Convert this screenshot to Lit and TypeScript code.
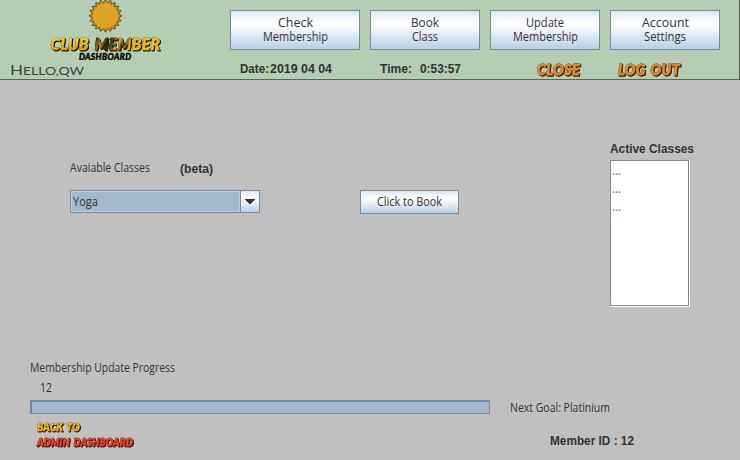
import { LitElement, html, svg, css } from "lit";
import { customElement, property } from "lit/decorators.js";

/** One line of text set to an exact width; its box is as high as the line, baseline at `base`. */
@customElement("fit-text")
export class FitText extends LitElement {
  @property() text = "";
  @property({ type: Number }) w = 50;
  @property({ type: Number }) h = 14;
  @property({ type: Number }) base = 12;
  @property() kind = "label";

  static styles = css`
    :host { display: block; flex: none; }
    svg { display: block; overflow: visible; }
    text { fill: #333; white-space: pre; }
    .label { font: 12px "Open Sans", "Noto Sans", sans-serif; }
    .dots { font: bold 11px "Open Sans", sans-serif; fill: #8a8a92; }
    .bold { font: bold 12px "Liberation Sans", Arial, sans-serif; }
    .hello { font: 11.5px Lato, sans-serif; fill: #3a4144; }
    .initial { font-size: 14px; }
    .comic {
      font: italic 900 14.5px Lato, sans-serif; word-spacing: 1.5px; letter-spacing: 0.4px;
      stroke-width: 0.8px; paint-order: stroke;
      filter: drop-shadow(1px 1px 0.3px #26241a) drop-shadow(0.3px 0.3px 0.3px #26241a);
    }
    .small { font-size: 12px; stroke-width: 0.6px; }
    .orange { fill: #e28a2e; stroke: #d27f2a; }
    .gold { fill: #f4b824; stroke: #dfa11f; }
    .red { fill: #f8432c; stroke: #e23a27; }
  `;

  render() {
    const body =
      this.kind === "hello"
        ? svg`<tspan class="initial">${this.text.charAt(0)}</tspan>${this.text.slice(1)}`
        : this.text;
    return html`<svg width=${this.w} height=${this.h}>
      ${svg`<text class=${this.kind} x="0" y=${this.base} textLength=${this.w}
        lengthAdjust="spacingAndGlyphs">${body}</text>`}
    </svg>`;
  }
}

@customElement("club-logo")
export class ClubLogo extends LitElement {
  static styles = css`
    :host { display: block; }
    svg { display: block; }
    .t {
      font: italic 900 17.5px Lato, sans-serif; stroke-width: 0.6px; letter-spacing: 0.5px;
      filter: drop-shadow(1px 1px 0.3px #141005) drop-shadow(0.5px 0.5px 0.4px #141005);
    }
    .sub { font: italic 900 9.5px Lato, sans-serif; letter-spacing: 0.4px; fill: #080808; stroke: #080808; stroke-width: 0.5px; }
  `;

  private sun() {
    const pts: string[] = [];
    const n = 20;
    for (let i = 0; i < n * 2; i++) {
      const r = i % 2 ? 13.2 : 16.4;
      const a = (i * Math.PI) / n - Math.PI / 2;
      pts.push(`${(56.5 + r * Math.cos(a)).toFixed(2)},${(15.8 + r * Math.sin(a)).toFixed(2)}`);
    }
    return pts.join(" ");
  }

  render() {
    return html`<svg width="116" height="60" viewBox="0 0 116 60">
      <defs>
        <linearGradient id="g" x1="0" y1="0" x2="0" y2="1">
          <stop offset="0.25" stop-color="#ffd83a" />
          <stop offset="0.85" stop-color="#dc9a10" />
        </linearGradient>
        <linearGradient id="m" x1="0" y1="0" x2="1" y2="0.12">
          <stop offset="0" stop-color="#8a6510" />
          <stop offset="0.06" stop-color="#3a2b08" />
          <stop offset="0.15" stop-color="#d29a1a" />
          <stop offset="0.23" stop-color="#2b2006" />
          <stop offset="0.32" stop-color="#5a430c" />
          <stop offset="0.42" stop-color="#e9b021" />
          <stop offset="0.5" stop-color="#54400d" />
          <stop offset="0.6" stop-color="#efb822" />
          <stop offset="1" stop-color="#f0bd28" />
        </linearGradient>
      </defs>
      <polygon points=${this.sun()} fill="#cf971c" stroke="#5c4c1e" stroke-width="1" />
      <circle cx="56.5" cy="15.8" r="12" fill="#dca524" />
      <text class="t" x="1.5" y="49.5" textLength="38.5" lengthAdjust="spacingAndGlyphs" fill="url(#g)" stroke="url(#g)">CLUB</text>
      <text class="t" x="45.5" y="49.5" textLength="66" lengthAdjust="spacingAndGlyphs" fill="url(#m)" stroke="url(#m)">MEMBER</text>
      <text class="sub" x="30" y="60.4" textLength="52.5" lengthAdjust="spacingAndGlyphs">DASHBOARD</text>
    </svg>`;
  }
}

@customElement("app-root")
export class AppRoot extends LitElement {
  static styles = css`
    :host { display: block; width: 740px; height: 460px; background: #c0c0c0; overflow: hidden; }
    * { box-sizing: border-box; }
    header {
      height: 80px; display: grid; grid-template-columns: 230px 1fr;
      background: #b4cdb3; border-right: 1px solid #56675a; border-bottom: 1px solid #56675a;
    }
    .brand club-logo { margin-left: 49px; }
    .brand fit-text { margin-left: 10px; }
    nav { display: grid; grid-template-columns: 130px 110px 110px 110px; gap: 10px; padding-top: 10px; }
    .btn {
      display: flex; flex-direction: column; align-items: center; justify-content: center;
      margin: 0; padding: 0; border: 1px solid #7a8a99; border-radius: 0; height: 40px;
      background: linear-gradient(#dde8f3 0%, #ffffff 32%, #ffffff 36%, #b8cfe5 100%);
    }
    .status { display: flex; padding: 12px 0 0 10px; }
    .gap-date { margin-left: 1px; }
    .gap-time { margin-left: 48px; }
    .gap-clock { margin-left: 8px; }
    .gap-close { margin-left: 76px; }
    .gap-out { margin-left: 38px; }
    main { height: 380px; display: grid; grid-template-rows: 280px 100px; }
    .booking { display: grid; grid-template-columns: 360px 250px 80px; padding-top: 60px; }
    .heading { display: flex; gap: 30px; height: 30px; margin: 20px 0 0 70px; }
    .heading .beta { margin-top: 2px; }
    .combo { display: flex; width: 190px; height: 23px; margin-left: 70px; border: 1px solid #7a8a99; }
    .value { flex: 1; border: 1px solid #b8cfe5; background: #a3b8cc; padding: 2px 0 0 1px; }
    .arrow {
      width: 19px; border-left: 1px solid #7a8a99; display: flex; align-items: center; justify-content: center;
      background: linear-gradient(#dde8f3, #fff 35%, #b8cfe5);
    }
    .book { width: 99px; height: 24px; margin-top: 50px; }
    .active { display: flex; flex-direction: column; }
    .list {
      width: 80px; height: 147px; margin-top: 6px; border-right: 1px solid #fff; border-bottom: 1px solid #fff;
    }
    .sheet { height: 146px; border: 1px solid #7a8a99; background: #fff; padding: 2px 0 0 1px; }
    .progress { display: grid; grid-template-columns: 490px 1fr; }
    .left { padding-left: 30px; }
    .count { margin: 6px 0 0 10px; }
    .track { height: 14px; margin-top: 6px; border: 1px solid #7a8a99; background: #7a8a99; }
    .fill { height: 12px; background: #a3b8cc; border-top: 1px solid #6382bf; border-left: 1px solid #6382bf; }
    .links { padding: 7px 0 0 7px; }
    .goal { margin: 40px 0 0 20px; }
    .member { margin: 20px 0 0 60px; }
  `;

  private menu = [
    [["Check", 35], ["Membership", 65]],
    [["Book", 28], ["Class", 26]],
    [["Update", 38], ["Membership", 65]],
    [["Account", 47], ["Settings", 42]],
  ];

  render() {
    return html`
      <header>
        <div class="brand">
          <club-logo></club-logo>
          <fit-text kind="hello" text="HELLO,QW" w="74" h="19" base="15"></fit-text>
        </div>
        <div>
          <nav>
            ${this.menu.map(
              (lines) => html`<button class="btn">
                ${lines.map(([t, w]) => html`<fit-text .text=${t} .w=${w} h="14" base="11"></fit-text>`)}
              </button>`
            )}
          </nav>
          <div class="status">
            <fit-text kind="bold" text="Date:" w="29" base="11"></fit-text>
            <fit-text class="gap-date" kind="bold" text="2019 04 04" w="62" base="11"></fit-text>
            <fit-text class="gap-time" kind="bold" text="Time:" w="32" base="11"></fit-text>
            <fit-text class="gap-clock" kind="bold" text="0:53:57" w="41" base="11"></fit-text>
            <fit-text class="gap-close" kind="comic orange" text="CLOSE" w="43" base="13"></fit-text>
            <fit-text class="gap-out" kind="comic orange" text="LOG OUT" w="62" base="13"></fit-text>
          </div>
        </div>
      </header>
      <main>
        <section class="booking">
          <div>
            <div class="heading">
              <fit-text text="Avaiable Classes" w="80"></fit-text>
              <fit-text class="beta" kind="bold" text="(beta)" w="33" base="11"></fit-text>
            </div>
            <div class="combo">
              <div class="value"><fit-text text="Yoga" w="25"></fit-text></div>
              <div class="arrow">
                <svg width="10" height="5" viewBox="0 0 10 5" shape-rendering="crispEdges">
                  <path d="M0 0H10V1H9V2H8V3H7V4H6V5H4V4H3V3H2V2H1V1H0Z" fill="#333" />
                </svg>
              </div>
            </div>
          </div>
          <button class="btn book"><fit-text text="Click to Book" w="65" h="14" base="11"></fit-text></button>
          <div class="active">
            <fit-text kind="bold" text="Active Classes" w="84" h="14" base="13"></fit-text>
            <div class="list">
              <div class="sheet">
                ${[0, 1, 2].map(() => html`<fit-text kind="dots" text="..." w="9" h="18" base="12"></fit-text>`)}
              </div>
            </div>
          </div>
        </section>
        <section class="progress">
          <div class="left">
            <fit-text text="Membership Update Progress" w="145"></fit-text>
            <fit-text class="count" text="12" w="12"></fit-text>
            <div class="track"><div class="fill"></div></div>
            <div class="links">
              <fit-text kind="comic gold small" text="BACK TO" w="43" h="15" base="10"></fit-text>
              <fit-text kind="comic red small" text="ADMIN DASHBOARD" w="96" h="14" base="10"></fit-text>
            </div>
          </div>
          <div>
            <fit-text class="goal" text="Next Goal: Platinium" w="100"></fit-text>
            <fit-text class="member" kind="bold" text="Member ID : 12" w="84" base="11"></fit-text>
          </div>
        </section>
      </main>
    `;
  }
}
